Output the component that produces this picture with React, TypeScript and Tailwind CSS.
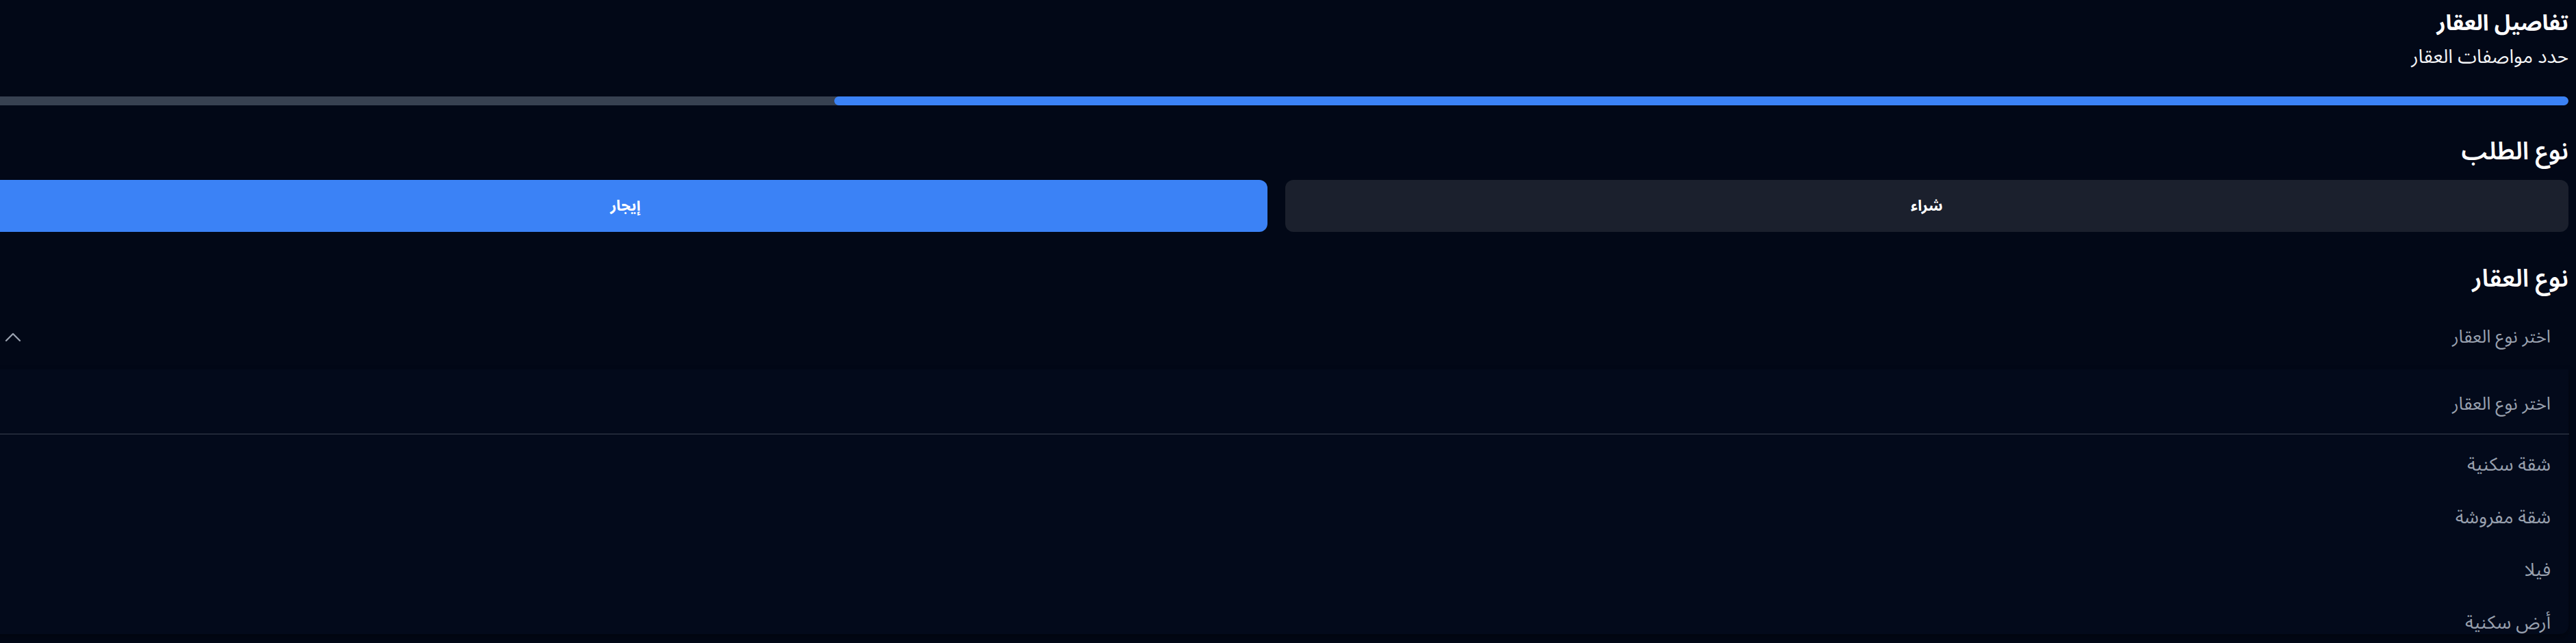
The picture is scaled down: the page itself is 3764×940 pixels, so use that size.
import { ChevronUp } from 'lucide-react';

const propertyTypes = ['شقة سكنية', 'شقة مفروشة', 'فيلا', 'أرض سكنية'];

export default function App() {
  return (
    <div
      dir="rtl"
      className="h-[940px] w-full overflow-hidden bg-[#020817] text-white"
      style={{ fontFamily: '"Noto Sans Arabic", "DejaVu Sans", "Noto Sans", sans-serif' }}
    >
      <div className="mr-[11px] w-[3777px]">
        {/* Header */}
        <div className="pt-[10px]">
          <h1 className="text-[32px] font-bold leading-[48px]">تفاصيل العقار</h1>
          <p className="mt-[6px] text-[28px] leading-[40px] text-gray-100">حدد مواصفات العقار</p>
        </div>

        {/* Progress */}
        <div className="mt-[37px] h-[13px] w-full overflow-hidden rounded-full bg-[#374151]">
          <div className="h-full rounded-full bg-[#3b82f6]" style={{ width: '67.1%' }} />
        </div>

        {/* نوع الطلب */}
        <h2 className="mt-[48px] text-[36px] font-semibold leading-[40px]">نوع الطلب</h2>
        <div className="mt-[21px] grid grid-cols-2 gap-[26px]">
          <button className="h-[76px] rounded-xl bg-[#1b202d] text-[22px] font-bold text-white">شراء</button>
          <button className="h-[76px] rounded-xl bg-[#3b82f6] text-[22px] font-bold text-white">إيجار</button>
        </div>

        {/* نوع العقار */}
        <h2 className="mt-[49px] text-[36px] font-semibold leading-[40px]">نوع العقار</h2>
        <div className="mt-[50px]">
          <div className="flex h-[30px] items-center justify-between pl-[23px] pr-[26px]">
            <span className="text-[26px] leading-[30px] text-gray-400">اختر نوع العقار</span>
            <ChevronUp className="h-10 w-10 text-gray-400" strokeWidth={1.4} />
          </div>
          <div className="mt-[32px] rounded-b-xl bg-[#030a1b] pb-[1px] pt-[35px] shadow-[0_6px_12px_rgba(0,0,0,0.35)]">
            <div className="flex h-[30px] items-center pr-[26px] text-[26px] text-gray-400">اختر نوع العقار</div>
            <div className="mr-[-1px] mt-[29px] h-px bg-[#3a4150]" />
            <div className="flex flex-col gap-[47px] pt-[30px]">
              {propertyTypes.map((t) => (
                <div key={t} className="flex h-[30px] items-center pr-[26px] text-[27px] text-gray-400">
                  {t}
                </div>
              ))}
            </div>
          </div>
        </div>
      </div>
    </div>
  );
}
